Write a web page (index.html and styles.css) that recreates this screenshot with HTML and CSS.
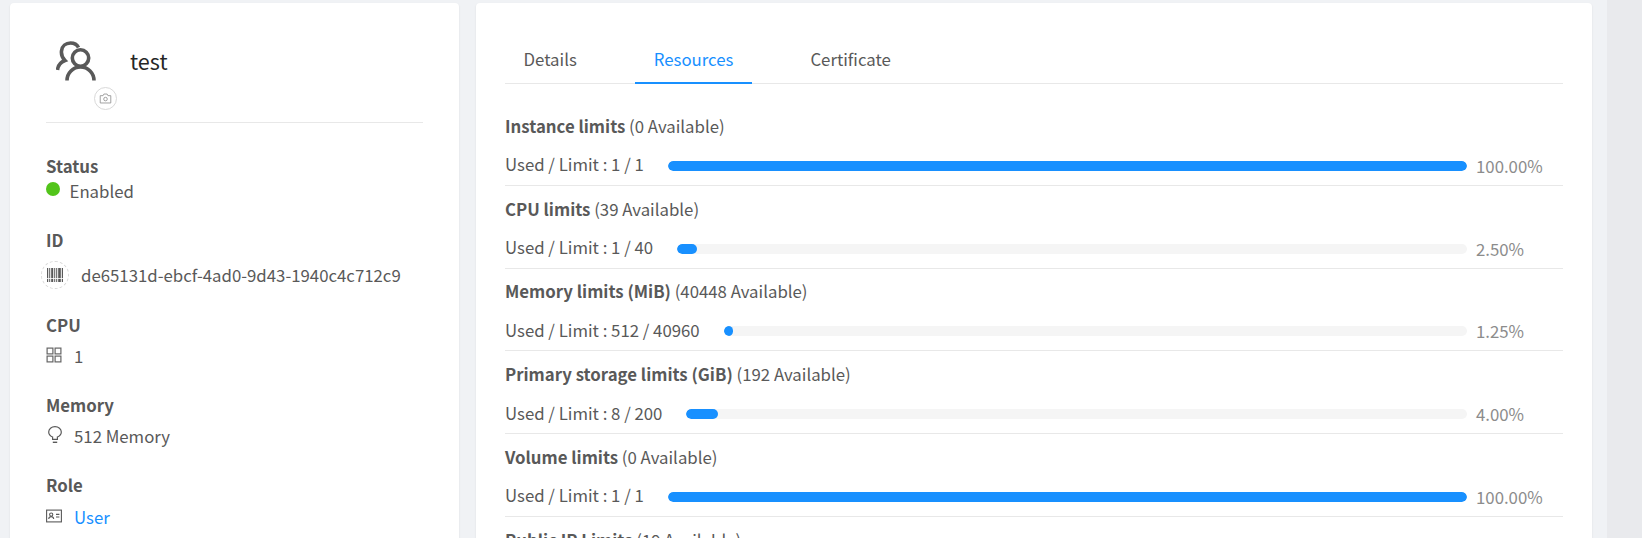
FILE: index.html
```html
<!DOCTYPE html>
<html lang="en">
<head>
    <meta charset="UTF-8">
    <title>Account test</title>
    <link rel="stylesheet" href="styles.css">
</head>
<body>
    <div class="layout">
        <div class="card info-card">
            <div class="profile">
                <div class="avatar">
                    <svg class="avatar-icon" viewBox="0 0 40 40" fill="none" stroke="#595959" stroke-width="3.6">
                        <path d="M1.5 29 C2 24.5 5 21 9 19.5 C6.5 17 5 14.5 5.5 10 C6 5 10 2 14.5 2 C18 2 21 3.5 22.5 6.5"/>
                        <circle cx="24.5" cy="17" r="8.2"/>
                        <path d="M11 39.5 C11 32 17 26 24.5 26 C32 26 38 32 38 39.5"/>
                    </svg>
                    <span class="avatar-badge">
                        <svg viewBox="0 0 16 16" width="13" height="13" fill="none" stroke="#8c8c8c" stroke-width="1">
                            <path d="M1.5 4.5 H5 L6 2.5 H10 L11 4.5 H14.5 V13.5 H1.5 Z"/>
                            <circle cx="8" cy="8.7" r="2.2"/>
                        </svg>
                    </span>
                </div>
                <div class="profile-name">test</div>
            </div>

            <div class="info-item status-item">
                <div class="info-label">Status</div>
                <div class="info-value"><span class="status-dot"></span>Enabled</div>
            </div>
            <div class="info-item id-item">
                <div class="info-label">ID</div>
                <div class="info-value">
                    <span class="barcode">
                        <svg viewBox="0 0 16 16" width="16" height="16" fill="#595959">
                            <rect x="0" y="1" width="1.2" height="14"/>
                            <rect x="2.2" y="1" width="1" height="14"/>
                            <rect x="4.2" y="1" width="2" height="14"/>
                            <rect x="7.2" y="1" width="1" height="14"/>
                            <rect x="9.2" y="1" width="1" height="14"/>
                            <rect x="11.2" y="1" width="2.6" height="14"/>
                            <rect x="14.8" y="1" width="1.2" height="14"/>
                            <rect x="0" y="11" width="16" height="0.8" fill="#fff"/>
                        </svg>
                    </span>
                    de65131d-ebcf-4ad0-9d43-1940c4c712c9
                </div>
            </div>
            <div class="info-item">
                <div class="info-label">CPU</div>
                <div class="info-value">
                    <svg class="info-icon" viewBox="0 0 16 16" fill="none" stroke="#666" stroke-width="1.2">
                        <rect x="1.1" y="1.1" width="5.8" height="5.8"/>
                        <rect x="9.1" y="1.1" width="5.8" height="5.8"/>
                        <rect x="1.1" y="9.1" width="5.8" height="5.8"/>
                        <rect x="9.1" y="9.1" width="5.8" height="5.8"/>
                    </svg>
                    1
                </div>
            </div>
            <div class="info-item">
                <div class="info-label">Memory</div>
                <div class="info-value">
                    <svg class="info-icon bulb-icon" viewBox="0 0 14 18" fill="none" stroke="#595959" stroke-width="1.2">
                        <path d="M4.6 13.4 V11 C2.2 9.9 0.7 8 0.7 5.9 C0.7 3 3.4 0.7 7 0.7 C10.6 0.7 13.3 3 13.3 5.9 C13.3 8 11.8 9.9 9.4 11 V13.4 Z"/>
                        <path d="M4.8 16.3 H9.2" stroke-width="1.4"/>
                    </svg>
                    512 Memory
                </div>
            </div>
            <div class="info-item role-item">
                <div class="info-label">Role</div>
                <div class="info-value">
                    <svg class="info-icon" viewBox="0 0 16 16" fill="none" stroke="#595959" stroke-width="1.1">
                        <rect x="0.6" y="2.1" width="14.8" height="11.8"/>
                        <circle cx="5.2" cy="6.6" r="1.6"/>
                        <path d="M2.7 11 C2.9 9.4 3.9 8.6 5.2 8.6 C6.5 8.6 7.5 9.4 7.7 11"/>
                        <path d="M10 6.4 H13.4 M10 9 H13.4"/>
                    </svg>
                    <a class="role-link" href="#">User</a>
                </div>
            </div>
        </div>

        <div class="card detail-card">
            <div class="tabs">
                <div class="tab">Details</div>
                <div class="tab active">Resources</div>
                <div class="tab">Certificate</div>
            </div>

            <div class="limit-row">
                <div class="limit-title"><b>Instance limits</b> (0 Available)</div>
                <div class="limit-usage">
                    <span class="limit-text">Used / Limit : 1 / 1</span>
                    <div class="bar"><div class="bar-fill" style="width: 100%"></div></div>
                    <span class="limit-percent">100.00%</span>
                </div>
            </div>
            <div class="limit-row">
                <div class="limit-title"><b>CPU limits</b> (39 Available)</div>
                <div class="limit-usage">
                    <span class="limit-text">Used / Limit : 1 / 40</span>
                    <div class="bar"><div class="bar-fill" style="width: 2.5%"></div></div>
                    <span class="limit-percent">2.50%</span>
                </div>
            </div>
            <div class="limit-row">
                <div class="limit-title"><b>Memory limits (MiB)</b> (40448 Available)</div>
                <div class="limit-usage">
                    <span class="limit-text">Used / Limit : 512 / 40960</span>
                    <div class="bar"><div class="bar-fill" style="width: 1.25%"></div></div>
                    <span class="limit-percent">1.25%</span>
                </div>
            </div>
            <div class="limit-row">
                <div class="limit-title"><b>Primary storage limits (GiB)</b> (192 Available)</div>
                <div class="limit-usage">
                    <span class="limit-text">Used / Limit : 8 / 200</span>
                    <div class="bar"><div class="bar-fill" style="width: 4%"></div></div>
                    <span class="limit-percent">4.00%</span>
                </div>
            </div>
            <div class="limit-row">
                <div class="limit-title"><b>Volume limits</b> (0 Available)</div>
                <div class="limit-usage">
                    <span class="limit-text">Used / Limit : 1 / 1</span>
                    <div class="bar"><div class="bar-fill" style="width: 100%"></div></div>
                    <span class="limit-percent">100.00%</span>
                </div>
            </div>
            <div class="limit-row">
                <div class="limit-title"><b>Public IP Limits</b> (19 Available)</div>
            </div>
        </div>
        <div class="side-strip"></div>
    </div>
</body>
</html>
```

FILE: styles.css
```css
html, body {
    height: 100%;
}

body {
    margin: 0;
    overflow: hidden;
    background-color: #f0f2f5;
    color: #595959;
    font-family: "Noto Sans CJK SC", "Noto Sans", sans-serif;
    font-size: 16.8px;
    line-height: 24px;
}

.layout {
    display: flex;
    height: 538px;
    padding: 3px 0 0 10px;
    box-sizing: border-box;
    overflow: hidden;
}

.card {
    background: white;
    border-radius: 4px;
    box-shadow: 0 1px 2px rgba(0, 0, 0, 0.1);
    box-sizing: border-box;
    flex: none;
    height: 700px;
}

.info-card {
    width: 449px;
    padding: 0 36px;
}

.profile {
    display: flex;
    align-items: flex-start;
    height: 119px;
    border-bottom: 1px solid #e8e8e8;
    margin-bottom: 31px;
}

.avatar {
    position: relative;
    width: 84px;
    height: 84px;
    flex: none;
}

.avatar-icon {
    position: absolute;
    left: 10px;
    top: 38px;
    width: 40px;
    height: 40px;
}

.avatar-badge {
    position: absolute;
    left: 48px;
    top: 84px;
    width: 23px;
    height: 23px;
    box-sizing: border-box;
    border: 1px solid #d9d9d9;
    border-radius: 50%;
    display: flex;
    align-items: center;
    justify-content: center;
}

.profile-name {
    font-size: 21.6px;
    line-height: 30px;
    color: #262626;
    margin-top: 43px;
}

.info-item {
    margin-bottom: 25px;
}

.id-item {
    margin-bottom: 24px;
}

.info-label {
    font-weight: 700;
    margin-bottom: 7px;
}

.status-item .info-label {
    margin-bottom: 1px;
}

.id-item .info-label {
    margin-bottom: 9px;
}

.role-item .info-label {
    margin-bottom: 8px;
}

.info-value {
    display: flex;
    align-items: center;
    min-height: 24px;
}

.status-dot {
    width: 14px;
    height: 14px;
    border-radius: 50%;
    background-color: #52c41a;
    margin-right: 9.5px;
    margin-top: -4px;
}

.barcode {
    width: 28px;
    height: 28px;
    box-sizing: border-box;
    border: 1px dashed #d9d9d9;
    border-radius: 50%;
    display: flex;
    align-items: center;
    justify-content: center;
    margin: 0 12px 0 -5px;
}

.info-icon {
    width: 16px;
    height: 16px;
    margin-right: 12px;
    margin-top: -3px;
    flex: none;
}

.bulb-icon {
    width: 14px;
    height: 18px;
    margin-left: 2px;
    margin-right: 12px;
}

.role-link {
    color: #1890ff;
    text-decoration: none;
}

.detail-card {
    width: 1116px;
    margin-left: 17px;
    padding: 0 29px;
}

.tabs {
    display: flex;
    gap: 40px;
    height: 80px;
    border-bottom: 1px solid #e8e8e8;
    box-sizing: content-box;
    margin-bottom: 19px;
}

.tab {
    padding: 0 18.5px;
    height: 80px;
    line-height: 112px;
    box-sizing: border-box;
}

.tab.active {
    color: #1890ff;
    border-bottom: 2px solid #1890ff;
    height: 81px;
}

.limit-row {
    height: 82.75px;
    box-sizing: border-box;
    padding-top: 10.75px;
    border-bottom: 1px solid #e8e8e8;
}

.limit-title b {
    font-weight: 700;
}

.limit-usage {
    display: flex;
    align-items: center;
    margin-top: 14px;
}

.limit-text {
    flex: none;
    margin-right: 24px;
    margin-top: -1px;
}

.bar {
    flex: 1;
    height: 10px;
    border-radius: 5px;
    background-color: #f5f5f5;
    overflow: hidden;
    margin-top: 2px;
}

.bar-fill {
    height: 100%;
    min-width: 9px;
    border-radius: 5px;
    background-color: #1890ff;
}

.limit-percent {
    flex: none;
    width: 87px;
    margin-left: 9px;
    margin-top: 2px;
    color: #8c8c8c;
}

.side-strip {
    flex: none;
    width: 35px;
    margin-left: 15px;
    margin-top: -3px;
    background-color: #e9eaed;
}
```
